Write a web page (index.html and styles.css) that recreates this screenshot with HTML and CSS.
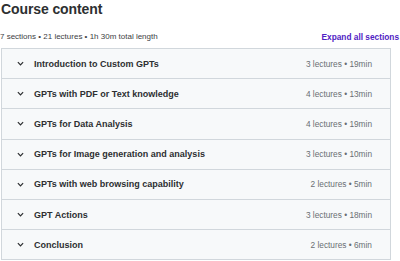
FILE: index.html
```html
<!DOCTYPE html>
<html lang="en">
<head>
    <meta charset="UTF-8">
    <meta name="viewport" content="width=device-width, initial-scale=1.0">
    <title>Course content</title>
    <link rel="stylesheet" href="styles.css">
</head>
<body>
    <div class="course">
        <h2 class="course-title">Course content</h2>

        <div class="meta-row">
            <span class="meta">7 sections • 21 lectures • 1h 30m total length</span>
            <a href="#" class="expand-all">Expand all sections</a>
        </div>

        <div class="sections">
            <div class="section">
                <svg class="chevron" viewBox="0 0 8 5"><path d="M1 1 L4 4 L7 1" /></svg>
                <span class="section-title">Introduction to Custom GPTs</span>
                <span class="section-info">3 lectures • 19min</span>
            </div>
            <div class="section">
                <svg class="chevron" viewBox="0 0 8 5"><path d="M1 1 L4 4 L7 1" /></svg>
                <span class="section-title">GPTs with PDF or Text knowledge</span>
                <span class="section-info">4 lectures • 13min</span>
            </div>
            <div class="section">
                <svg class="chevron" viewBox="0 0 8 5"><path d="M1 1 L4 4 L7 1" /></svg>
                <span class="section-title">GPTs for Data Analysis</span>
                <span class="section-info">4 lectures • 19min</span>
            </div>
            <div class="section">
                <svg class="chevron" viewBox="0 0 8 5"><path d="M1 1 L4 4 L7 1" /></svg>
                <span class="section-title">GPTs for Image generation and analysis</span>
                <span class="section-info">3 lectures • 10min</span>
            </div>
            <div class="section">
                <svg class="chevron" viewBox="0 0 8 5"><path d="M1 1 L4 4 L7 1" /></svg>
                <span class="section-title">GPTs with web browsing capability</span>
                <span class="section-info">2 lectures • 5min</span>
            </div>
            <div class="section">
                <svg class="chevron" viewBox="0 0 8 5"><path d="M1 1 L4 4 L7 1" /></svg>
                <span class="section-title">GPT Actions</span>
                <span class="section-info">3 lectures • 18min</span>
            </div>
            <div class="section">
                <svg class="chevron" viewBox="0 0 8 5"><path d="M1 1 L4 4 L7 1" /></svg>
                <span class="section-title">Conclusion</span>
                <span class="section-info">2 lectures • 6min</span>
            </div>
        </div>
    </div>
</body>
</html>
```

FILE: styles.css
```css
body {
    margin: 0;
    font-family: 'Liberation Sans', Arial, sans-serif;
    color: #2d2f31;
    background-color: #ffffff;
    overflow: hidden;
}
.course {
    width: 390px;
    padding-left: 1px;
}
.course-title {
    margin: 0;
    font-size: 14px;
    line-height: 18px;
    font-weight: bold;
    letter-spacing: -0.1px;
    color: #2d2f31;
}
.meta-row {
    display: flex;
    justify-content: space-between;
    align-items: center;
    width: 399px;
    margin-top: 11px;
    height: 15px;
    margin-bottom: 4px;
    margin-left: -1px;
}
.meta {
    font-size: 8px;
    color: #3e4143;
}
.expand-all {
    font-size: 8.3px;
    font-weight: bold;
    color: #5022c3;
    text-decoration: none;
}
.sections {
    border: 1px solid #d1d7dc;
    border-bottom: none;
}
.section {
    display: flex;
    align-items: center;
    height: 29.2px;
    padding: 0 18px 0 15px;
    background-color: #f7f9fa;
    border-bottom: 1px solid #d1d7dc;
}
.chevron {
    width: 7px;
    height: 5px;
    margin-right: 10px;
    fill: none;
    stroke: #2d2f31;
    stroke-width: 1.4;
}
.section-title {
    flex: 1;
    font-size: 9px;
    font-weight: bold;
    color: #2d2f31;
}
.section-info {
    font-size: 8.3px;
    color: #6a6f73;
}
```
